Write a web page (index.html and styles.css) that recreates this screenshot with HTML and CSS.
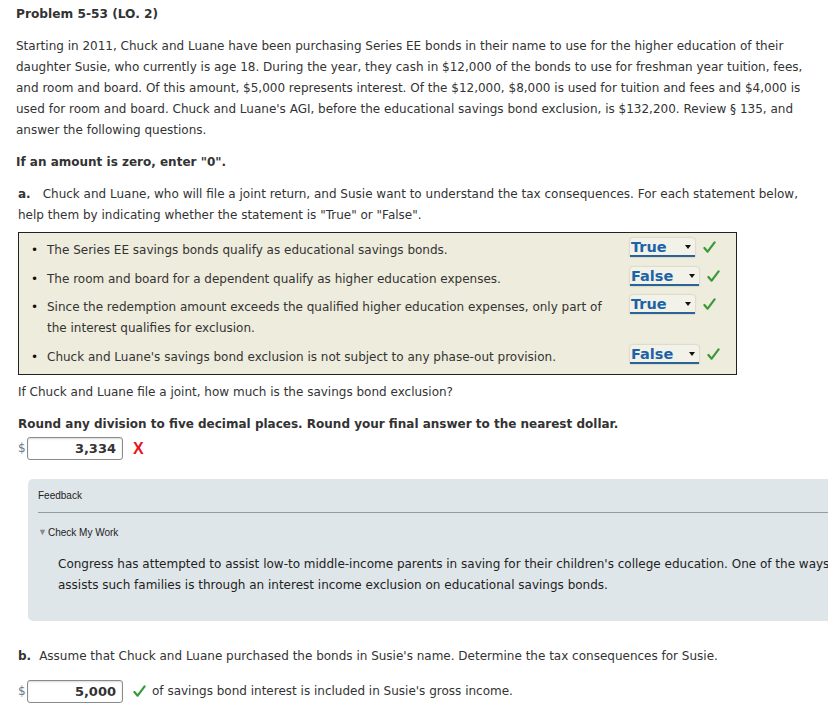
FILE: index.html
```html
<!DOCTYPE html>
<html lang="en">
<head>
<meta charset="utf-8">
<title>Problem 5-53</title>
<link rel="stylesheet" href="styles.css">
</head>
<body>
<div class="page">

  <h1 class="title">Problem 5-53 (LO. 2)</h1>

  <p class="intro">Starting in 2011, Chuck and Luane have been purchasing Series EE bonds in their name to use for the higher education of their daughter Susie, who currently is age 18. During the year, they cash in $12,000 of the bonds to use for freshman year tuition, fees, and room and board. Of this amount, $5,000 represents interest. Of the $12,000, $8,000 is used for tuition and fees and $4,000 is used for room and board. Chuck and Luane's AGI, before the educational savings bond exclusion, is $132,200. Review &sect; 135, and answer the following questions.</p>

  <p class="note">If an amount is zero, enter "0".</p>

  <p class="part"><b class="label">a.</b>Chuck and Luane, who will file a joint return, and Susie want to understand the tax consequences. For each statement below, help them by indicating whether the statement is "True" or "False".</p>

  <ul class="statements">
    <li>
      <span class="bull">&bull;</span>
      <span class="stmt">The Series EE savings bonds qualify as educational savings bonds.</span>
      <span class="pick"><span class="select w-true">True<i class="arrow"></i></span><svg class="tick" viewBox="0 0 14 14"><path d="M1.5 7.5 L5 11.5 L12.5 1.5" /></svg></span>
    </li>
    <li>
      <span class="bull">&bull;</span>
      <span class="stmt">The room and board for a dependent qualify as higher education expenses.</span>
      <span class="pick"><span class="select w-false">False<i class="arrow"></i></span><svg class="tick" viewBox="0 0 14 14"><path d="M1.5 7.5 L5 11.5 L12.5 1.5" /></svg></span>
    </li>
    <li>
      <span class="bull">&bull;</span>
      <span class="stmt">Since the redemption amount exceeds the qualified higher education expenses, only part of the interest qualifies for exclusion.</span>
      <span class="pick"><span class="select w-true">True<i class="arrow"></i></span><svg class="tick" viewBox="0 0 14 14"><path d="M1.5 7.5 L5 11.5 L12.5 1.5" /></svg></span>
    </li>
    <li>
      <span class="bull">&bull;</span>
      <span class="stmt">Chuck and Luane's savings bond exclusion is not subject to any phase-out provision.</span>
      <span class="pick"><span class="select w-false">False<i class="arrow"></i></span><svg class="tick" viewBox="0 0 14 14"><path d="M1.5 7.5 L5 11.5 L12.5 1.5" /></svg></span>
    </li>
  </ul>

  <p class="question">If Chuck and Luane file a joint, how much is the savings bond exclusion?</p>

  <p class="note round">Round any division to five decimal places. Round your final answer to the nearest dollar.</p>

  <div class="answer">
    <span class="dollar">$</span><span class="amount">3,334</span><span class="wrong">X</span>
  </div>

  <div class="feedback">
    <div class="fb-head">Feedback</div>
    <div class="fb-toggle"><span class="tri">&#9660;</span>Check My Work</div>
    <p class="fb-text">Congress has attempted to assist low-to middle-income parents in saving for their children's college education. One of the ways Congress<br>assists such families is through an interest income exclusion on educational savings bonds.</p>
  </div>

  <p class="part part-b"><b class="label label-b">b.</b>Assume that Chuck and Luane purchased the bonds in Susie's name. Determine the tax consequences for Susie.</p>

  <div class="answer answer-b">
    <span class="dollar">$</span><span class="amount">5,000</span><svg class="tick" viewBox="0 0 14 14"><path d="M1.5 7.5 L5 11.5 L12.5 1.5" /></svg><span class="after">of savings bond interest is included in Susie's gross income.</span>
  </div>

</div>
</body>
</html>
```

FILE: styles.css
```css
html, body {
  margin: 0;
  padding: 0;
  background: #ffffff;
  overflow-x: hidden;
}

body {
  color: #333333;
  font-family: "DejaVu Sans", Verdana, sans-serif;
  font-size: 12px;
  line-height: 21px;
}

.page {
  padding: 4px 16px 20px 16px;
  width: 796px;
}

p {
  margin: 0;
}

.title {
  margin: 0;
  font-size: 12.2px;
  font-weight: bold;
  line-height: 21px;
}

.intro {
  margin-top: 11px;
}

.note {
  margin-top: 11px;
  font-weight: bold;
}

.part {
  margin-top: 11px;
  padding-left: 2px;
}

.label {
  margin-right: 12px;
}

.label-b {
  margin-right: 8px;
}

/* statement box */
.statements {
  list-style: none;
  margin: 6px 0 0 2px;
  padding: 7px 0 6px 0;
  width: 717px;
  background: #eeecdc;
  border: 1px solid #222222;
}

.statements li {
  display: grid;
  grid-template-columns: 12px 16px 564px auto;
  align-items: start;
  margin-bottom: 8px;
}

.statements li:nth-child(2) {
  margin-bottom: 7px;
}

.statements li:last-child {
  margin-bottom: 0;
}

.bull {
  grid-column: 2;
  font-size: 12px;
  color: #111;
}

.stmt {
  grid-column: 3;
  color: #333;
}

.pick {
  grid-column: 4;
  display: flex;
  align-items: center;
  gap: 8px;
  margin-left: 19px;
  margin-top: -2px;
}

.select {
  position: relative;
  display: inline-block;
  box-sizing: border-box;
  height: 19px;
  line-height: 18px;
  padding-left: 1px;
  font-size: 14.5px;
  font-weight: bold;
  color: #1c63a8;
  border-bottom: 2px solid #2a6496;
  border-radius: 3px 3px 0 0;
  box-shadow: 0 0 2px rgba(0,0,0,0.25);
  background: #f3f2e8;
}

.w-true { width: 65px; }
.w-false { width: 69px; }

.arrow {
  position: absolute;
  right: 4px;
  top: 7px;
  width: 0;
  height: 0;
  border-left: 3px solid transparent;
  border-right: 3px solid transparent;
  border-top: 4px solid #111;
}

.tick {
  width: 13px;
  height: 13px;
  flex: none;
}

.tick path {
  fill: none;
  stroke: #3a9a3a;
  stroke-width: 2.4;
  stroke-linecap: round;
  stroke-linejoin: round;
}

.question {
  margin-top: 7px;
  padding-left: 2px;
}

.round {
  margin-top: 11px;
  padding-left: 2px;
}

/* answers */
.answer {
  display: flex;
  align-items: center;
  margin-top: 2px;
  padding-left: 2px;
  height: 23px;
}

.dollar {
  color: #6a7a8a;
  width: 9px;
}

.amount {
  display: inline-block;
  box-sizing: border-box;
  width: 96px;
  height: 23px;
  line-height: 21px;
  padding-right: 6px;
  text-align: right;
  font-size: 13px;
  font-weight: bold;
  color: #333;
  border: 1px solid #8a8a8a;
  border-radius: 3px;
  box-shadow: inset 0 1px 2px rgba(0,0,0,0.15);
  background: #fff;
}

.wrong {
  margin-left: 10px;
  font-family: "Liberation Sans", Arial, sans-serif;
  font-weight: bold;
  font-size: 16px;
  color: #e8141b;
}

.answer .tick {
  margin-left: 10px;
}

.after {
  margin-left: 6px;
}

/* feedback panel */
.feedback {
  margin: 19px 0 0 12px;
  width: 900px;
  box-sizing: border-box;
  padding: 10px 0 25px 10px;
  background: #dfe6e9;
  border-radius: 5px;
  font-family: "Liberation Sans", Arial, sans-serif;
  color: #222;
}

.fb-head {
  font-size: 10px;
  line-height: 14px;
  padding-bottom: 9px;
  border-bottom: 1px solid #9a9a9a;
}

.fb-toggle {
  font-size: 10px;
  line-height: 14px;
  margin-top: 12px;
}

.tri {
  font-size: 9px;
  color: #8a8a8a;
  margin-right: 1px;
  vertical-align: 1px;
}

.fb-text {
  margin-top: 14px;
  padding-left: 20px;
  white-space: nowrap;
  font-family: "DejaVu Sans", Verdana, sans-serif;
  font-size: 12px;
  line-height: 21px;
  color: #222;
}

.part-b {
  margin-top: 25px;
}

.answer-b {
  margin-top: 13px;
}
```
